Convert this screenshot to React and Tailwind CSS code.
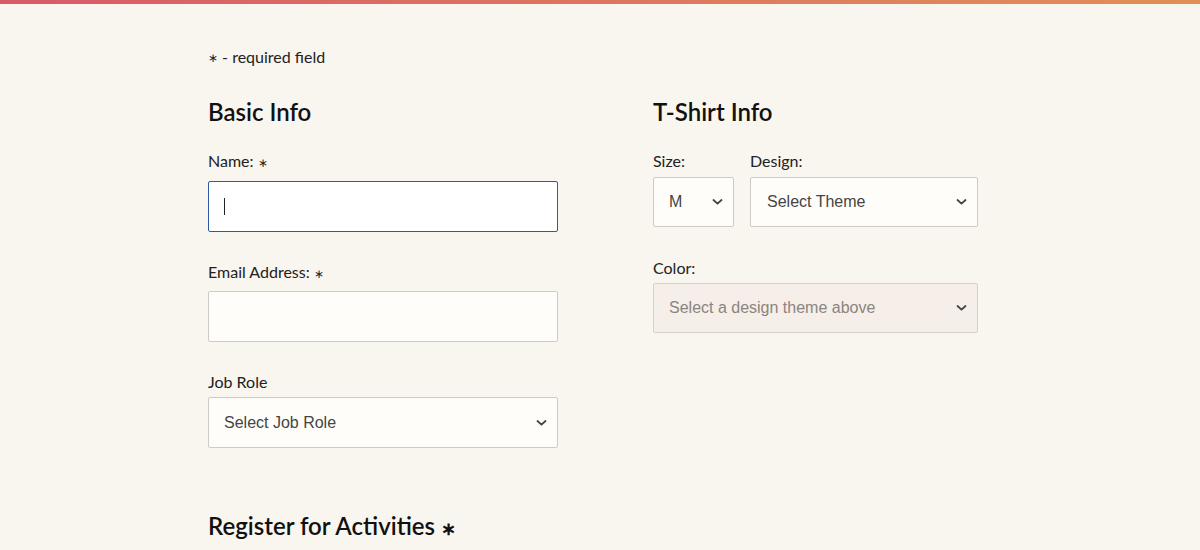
import React from "react";

const Chevron = () => (
  <svg width="11" height="7" viewBox="0 0 11 7" className="pointer-events-none absolute right-[10px] top-1/2 -translate-y-1/2">
    <path d="M1.5 1.5 L5.5 5.2 L9.5 1.5" fill="none" stroke="#444" strokeWidth="1.8" strokeLinecap="round" strokeLinejoin="round" />
  </svg>
);

function SelectBox({ text, className = "", disabled = false }) {
  return (
    <div
      className={`relative flex items-center border rounded-[2px] font-['Liberation_Sans',Arial,sans-serif] text-[16px] ${
        disabled ? "bg-[#f6eee9] border-[#d6d0cb] text-[#8a8580]" : "bg-[#fffdf9] border-[#cfcac5] text-[#444]"
      } ${className}`}
    >
      <span>{text}</span>
      <Chevron />
    </div>
  );
}

function Label({ children }) {
  return <div className="text-[16px] text-[#222] leading-[15px] mb-[11px]">{children}</div>;
}

export default function App() {
  return (
    <div className="min-h-[550px] bg-[#f9f5ef] font-['Lato','Noto_Sans',sans-serif]">
      <div className="h-[4px] bg-gradient-to-r from-[#d85a68] to-[#e09056]" />
      <div className="w-[784px] mx-auto pt-[45px]">
        <p className="text-[16px] text-[#222] leading-[15px]">
          <span className="text-[12px] relative -top-[1px]">∗</span> - required field
        </p>

        <div className="flex mt-[34px]">
          <div className="w-[445px]">
            <h2 className="text-[24px] font-semibold text-[#111] leading-none">Basic Info</h2>

            <div className="mt-[29px]">
              <Label>
                Name: <span className="text-[12px]">∗</span>
              </Label>
              <div className="w-[350px] h-[51px] bg-white border border-[#2d5aa8] rounded-[2px] flex items-center pl-[15px]">
                <span className="w-[1px] h-[17px] bg-[#222]" />
              </div>
            </div>

            <div className="mt-[32px]">
              <Label>
                Email Address: <span className="text-[12px]">∗</span>
              </Label>
              <div className="w-[350px] h-[51px] bg-[#fffdf9] border border-[#cfcac5] rounded-[2px] -mt-[1px]" />
            </div>

            <div className="mt-[32px]">
              <Label>Job Role</Label>
              <SelectBox text="Select Job Role" className="w-[350px] h-[51px] pl-[15px] -mt-[3px]" />
            </div>
          </div>

          <div className="w-[325px]">
            <h2 className="text-[24px] font-semibold text-[#111] leading-none">T-Shirt Info</h2>

            <div className="flex gap-[16px] mt-[29px]">
              <div>
                <Label>Size:</Label>
                <SelectBox text="M" className="w-[81px] h-[50px] pl-[15px] -mt-[2px]" />
              </div>
              <div>
                <Label>Design:</Label>
                <SelectBox text="Select Theme" className="w-[228px] h-[50px] pl-[16px] -mt-[2px]" />
              </div>
            </div>

            <div className="mt-[33px]">
              <Label>Color:</Label>
              <SelectBox text="Select a design theme above" disabled className="w-[325px] h-[50px] pl-[15px] -mt-[3px]" />
            </div>
          </div>
        </div>

        <h2 className="text-[24px] font-semibold text-[#111] leading-none mt-[66px]">
          Register for Activities <span className="text-[18px]">∗</span>
        </h2>
      </div>
    </div>
  );
}
